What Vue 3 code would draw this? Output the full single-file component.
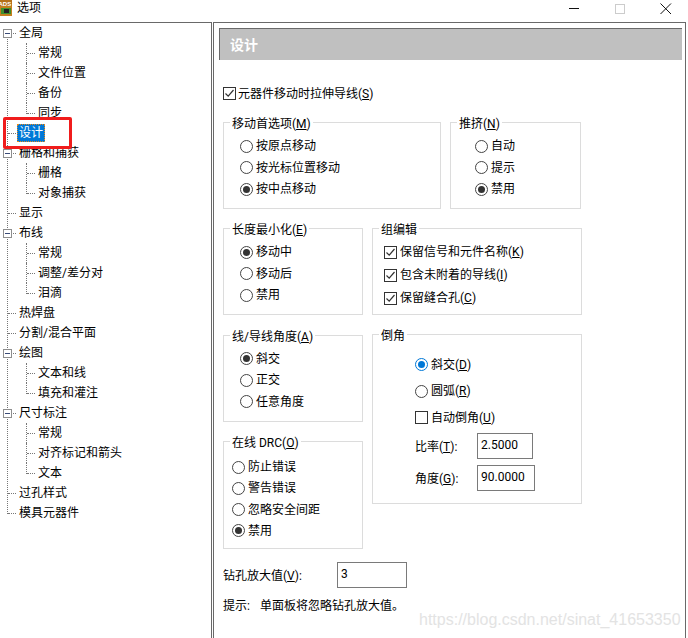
<script setup>
import { h } from 'vue'

const Mn = (props) => {
  const m = props.t.match(/^(.*\()(.)(\).*)$/)
  return m ? [m[1], h('u', m[2]), m[3]] : props.t
}
Mn.props = ['t']

const tree = [
  { t: '全局', lv: 0, exp: true },
  { t: '常规', lv: 1 },
  { t: '文件位置', lv: 1 },
  { t: '备份', lv: 1 },
  { t: '同步', lv: 1, last: true },
  { t: '设计', lv: 0, sel: true },
  { t: '栅格和捕获', lv: 0, exp: true },
  { t: '栅格', lv: 1 },
  { t: '对象捕获', lv: 1, last: true },
  { t: '显示', lv: 0 },
  { t: '布线', lv: 0, exp: true },
  { t: '常规', lv: 1 },
  { t: '调整/差分对', lv: 1 },
  { t: '泪滴', lv: 1, last: true },
  { t: '热焊盘', lv: 0 },
  { t: '分割/混合平面', lv: 0 },
  { t: '绘图', lv: 0, exp: true },
  { t: '文本和线', lv: 1 },
  { t: '填充和灌注', lv: 1, last: true },
  { t: '尺寸标注', lv: 0, exp: true },
  { t: '常规', lv: 1 },
  { t: '对齐标记和箭头', lv: 1 },
  { t: '文本', lv: 1, last: true },
  { t: '过孔样式', lv: 0 },
  { t: '模具元器件', lv: 0 },
]

const moveOpts = [{ t: '按原点移动' }, { t: '按光标位置移动' }, { t: '按中点移动', on: true }]
const pushOpts = [{ t: '自动' }, { t: '提示' }, { t: '禁用', on: true }]
const lenOpts = [{ t: '移动中', on: true }, { t: '移动后' }, { t: '禁用' }]
const angOpts = [{ t: '斜交', on: true }, { t: '正交' }, { t: '任意角度' }]
const drcOpts = [{ t: '防止错误' }, { t: '警告错误' }, { t: '忽略安全间距' }, { t: '禁用', on: true }]
const groupOpts = ['保留信号和元件名称(K)', '包含未附着的导线(I)', '保留缝合孔(C)']
</script>

<template>
  <div class="win">
    <header class="titlebar">
      <svg class="appicon" width="12" height="16" viewBox="0 0 12 16">
        <rect width="12" height="16" fill="#c47f1e" />
        <rect y="0" width="12" height="6" fill="#b5701a" />
        <text x="-1.5" y="5.5" font-size="6" font-weight="700" font-family="Liberation Sans" fill="#fff">ADS</text>
        <rect x="1" y="8" width="10" height="6" fill="#3f8f2c" />
        <rect x="4" y="9" width="5" height="4" fill="#222" />
      </svg>
      <span class="title">选项</span>
      <div class="controls">
        <span class="ctl"><svg width="12" height="12" viewBox="0 0 12 12"><path d="M1 5.5H11" stroke="#111" fill="none" /></svg></span>
        <span class="ctl"><svg width="12" height="12" viewBox="0 0 12 12"><rect x="1.5" y="1.5" width="9" height="9" stroke="#ccc" fill="none" /></svg></span>
        <span class="ctl"><svg width="12" height="12" viewBox="0 0 12 12"><path d="M.5 .5L11 11M11 .5L.5 11" stroke="#111" fill="none" /></svg></span>
      </div>
    </header>

    <div class="body">
      <nav class="tree">
        <div
          v-for="(n, i) in tree"
          :key="i"
          class="node"
          :class="['lv' + n.lv, { last: n.last }]"
        >
          <span v-if="n.exp" class="exp"><i></i></span>
          <span class="nlabel" :class="{ sel: n.sel }">{{ n.t }}</span>
        </div>
      </nav>

      <main class="panel">
        <div class="head">设计</div>
        <div class="content">
          <label class="check top"><span class="cb on"><svg width="11" height="11" viewBox="0 0 11 11"><path d="M1.5 5.5L4.2 8.2L9.5 2" stroke="#333" stroke-width="1.2" fill="none" /></svg></span><span class="tx"><Mn t="元器件移动时拉伸导线(S)" /></span></label>

          <div class="row1">
            <section class="group g-move">
              <div class="legend"><Mn t="移动首选项(M)" /></div>
              <div class="opts">
                <div v-for="o in moveOpts" :key="o.t" class="opt"><span class="rd" :class="{ on: o.on }"></span>{{ o.t }}</div>
              </div>
            </section>
            <section class="group g-push">
              <div class="legend"><Mn t="推挤(N)" /></div>
              <div class="opts">
                <div v-for="o in pushOpts" :key="o.t" class="opt"><span class="rd" :class="{ on: o.on }"></span>{{ o.t }}</div>
              </div>
            </section>
          </div>

          <div class="row2">
            <div class="col-l">
              <section class="group g-std">
                <div class="legend"><Mn t="长度最小化(E)" /></div>
                <div class="opts">
                  <div v-for="o in lenOpts" :key="o.t" class="opt"><span class="rd" :class="{ on: o.on }"></span>{{ o.t }}</div>
                </div>
              </section>
              <section class="group g-std">
                <div class="legend"><Mn t="线/导线角度(A)" /></div>
                <div class="opts">
                  <div v-for="o in angOpts" :key="o.t" class="opt"><span class="rd" :class="{ on: o.on }"></span>{{ o.t }}</div>
                </div>
              </section>
              <section class="group g-drc">
                <div class="legend"><Mn t="在线 DRC(O)" /></div>
                <div class="opts">
                  <div v-for="o in drcOpts" :key="o.t" class="opt"><span class="rd" :class="{ on: o.on }"></span>{{ o.t }}</div>
                </div>
              </section>
            </div>

            <div class="col-r">
              <section class="group g-edit">
                <div class="legend">组编辑</div>
                <div class="opts">
                  <label v-for="t in groupOpts" :key="t" class="check"><span class="cb on"><svg width="11" height="11" viewBox="0 0 11 11"><path d="M1.5 5.5L4.2 8.2L9.5 2" stroke="#333" stroke-width="1.2" fill="none" /></svg></span><Mn :t="t" /></label>
                </div>
              </section>
              <section class="group g-chamfer">
                <div class="legend">倒角</div>
                <div class="opts">
                  <div class="opt"><span class="rd on blue"></span><Mn t="斜交(D)" /></div>
                  <div class="opt"><span class="rd"></span><Mn t="圆弧(R)" /></div>
                  <label class="check"><span class="cb"></span><Mn t="自动倒角(U)" /></label>
                </div>
                <div class="fields">
                  <div class="field"><span class="flabel"><Mn t="比率(T):" /></span><input class="inp w56" readonly value="2.5000" /></div>
                  <div class="field"><span class="flabel"><Mn t="角度(G):" /></span><input class="inp w58" readonly value="90.0000" /></div>
                </div>
              </section>
            </div>
          </div>

          <div class="drill">
            <span class="dlabel"><Mn t="钻孔放大值(V):" /></span>
            <input class="inp w70" readonly value="3" />
          </div>
          <p class="hint"><span class="hlabel">提示:</span><span>单面板将忽略钻孔放大值。</span></p>
        </div>
      </main>
    </div>

    <div class="redbox"></div>
    <div class="watermark">https://blog.csdn.net/sinat_41653350</div>
  </div>
</template>

<style scoped>
.win {
  position: relative;
  width: 688px;
  height: 638px;
  overflow: hidden;
  background: #fff;
  color: #000;
  font-family: "Roboto", "Noto Sans CJK SC", sans-serif;
  font-size: 12px;
  line-height: 16px;
}
.titlebar {
  display: flex;
  align-items: flex-start;
  height: 22px;
}
.appicon { display: block; flex: none; }
.title { margin-left: 5px; line-height: 17px; }
.controls { display: flex; margin-left: auto; margin-right: -1px; }
.ctl {
  width: 46px;
  height: 16px;
  display: flex;
  align-items: center;
  justify-content: center;
  padding-top: 1px;
  box-sizing: border-box;
}
.ctl svg { display: block; }

.body { display: flex; height: 616px; }
.tree {
  position: relative;
  width: 212px;
  box-sizing: border-box;
  border-top: 1px solid #696969;
  border-right: 1px solid #696969;
  flex: none;
}
.tree::before {
  content: "";
  position: absolute;
  left: 7px;
  top: 13px;
  height: 478px;
  border-left: 1px dotted #777;
}
.node {
  position: relative;
  height: 20px;
  display: flex;
  align-items: center;
}
.node::before {
  content: "";
  position: absolute;
  top: 10px;
  border-top: 1px dotted #777;
}
.lv0 { padding-left: 17px; }
.lv0::before { left: 8px; width: 8px; }
.lv1 { padding-left: 36px; }
.lv1::before { left: 27px; width: 8px; }
.lv1::after {
  content: "";
  position: absolute;
  left: 26px;
  top: 0;
  height: 20px;
  border-left: 1px dotted #777;
}
.lv1.last::after { height: 11px; }
.exp {
  position: absolute;
  left: 3px;
  top: 6px;
  width: 9px;
  height: 9px;
  box-sizing: border-box;
  border: 1px solid #8e8e8e;
  background: #fff;
  display: flex;
  align-items: center;
  justify-content: center;
  z-index: 1;
}
.exp i { display: block; width: 5px; height: 1px; background: #3c4c78; }
.nlabel {
  padding: 0 2px;
  height: 18px;
  line-height: 19px;
  white-space: nowrap;
}
.nlabel.sel {
  background: #0078d7;
  color: #fff;
  outline: 1px dotted #e58a1f;
  outline-offset: -1px;
}

.panel {
  width: 473px;
  margin-left: 1px;
  box-sizing: border-box;
  border: 1px solid #696969;
  border-bottom: 0;
  padding: 5px 3px 0 5px;
  flex: none;
}
.head {
  height: 32px;
  box-sizing: border-box;
  border-top: 1px solid #696969;
  border-left: 1px solid #696969;
  background: #c0c0c0;
  color: #fff;
  font-weight: 700;
  font-size: 14px;
  line-height: 33px;
  padding-left: 10px;
}
.content { padding: 25px 0 0 4px; }

.check { display: flex; align-items: center; height: 20px; white-space: nowrap; }
.top { height: 16px; }
.tx { padding-top: 1px; }
.cb {
  width: 13px;
  height: 13px;
  box-sizing: border-box;
  border: 1px solid #333;
  margin-right: 3px;
  flex: none;
  display: flex;
  align-items: center;
  justify-content: center;
}
.top .cb { margin-right: 2px; }
.cb svg { display: block; }
.rd {
  position: relative;
  width: 13px;
  height: 13px;
  box-sizing: border-box;
  border: 1px solid #444;
  border-radius: 50%;
  margin-right: 3px;
  flex: none;
}
.rd.on::after {
  content: "";
  position: absolute;
  left: 2px;
  top: 2px;
  width: 7px;
  height: 7px;
  border-radius: 50%;
  background: #333;
}
.rd.blue { border-color: #0078d7; }
.rd.blue::after { background: #0078d7; }

.group {
  box-sizing: border-box;
  border: 1px solid #dcdcdc;
}
.legend {
  width: fit-content;
  height: 18px;
  line-height: 20px;
  margin: -9px 0 0 6px;
  padding: 0 2px;
  background: #fff;
  white-space: nowrap;
}
.opts { display: flex; flex-direction: column; gap: 1.5px; margin-top: 4px; }
.opt { display: flex; align-items: center; height: 20px; white-space: nowrap; }

.row1 { display: flex; gap: 9px; margin-top: 21px; }
.g-move { width: 218px; height: 87px; }
.g-move .opts { padding-left: 16px; }
.g-push { width: 131px; height: 87px; }
.g-push .opts { padding-left: 24px; }

.row2 { display: flex; gap: 9px; margin-top: 19px; align-items: flex-start; }
.col-l { display: flex; flex-direction: column; gap: 19.5px; width: 140px; }
.col-r { display: flex; flex-direction: column; gap: 19px; width: 210px; }
.g-std { height: 87px; }
.g-std .opts { padding-left: 16px; }
.g-drc { height: 108px; }
.g-drc .opts { padding-left: 8px; gap: 1.33px; margin-top: 6px; }
.g-edit { height: 87px; }
.g-edit .opts { padding-left: 11px; gap: 3px; }
.g-chamfer { height: 170px; }
.g-chamfer .opts { padding-left: 42px; gap: 6.5px; margin-top: 10.5px; }
.fields { display: flex; flex-direction: column; gap: 6px; margin-top: 5.5px; padding-left: 42px; }
.field { display: flex; align-items: center; height: 26px; }
.flabel { width: 62px; flex: none; padding-top: 1px; }

.inp {
  display: block;
  height: 26px;
  box-sizing: border-box;
  border: 1px solid #7a7a7a;
  padding: 0 0 3px 3px;
  margin: 0;
  font: inherit;
  color: #000;
  background: #fff;
  outline: none;
}
.w56 { width: 56px; }
.w58 { width: 58px; }
.w70 { width: 70px; }

.drill { display: flex; align-items: center; margin-top: 13px; height: 26px; }
.dlabel { width: 114px; flex: none; padding-top: 2px; }
.hint { display: flex; margin: 10px 0 0; }
.hlabel { width: 37px; flex: none; }

.redbox {
  position: absolute;
  left: 3px;
  top: 117px;
  width: 69px;
  height: 32px;
  box-sizing: border-box;
  border: 3px solid #f01c1c;
  border-radius: 2px;
}
.watermark {
  position: absolute;
  left: 419px;
  top: 609px;
  font-family: "Liberation Sans", sans-serif;
  font-size: 16px;
  line-height: 22px;
  color: #e3e3e3;
  white-space: nowrap;
}
</style>
